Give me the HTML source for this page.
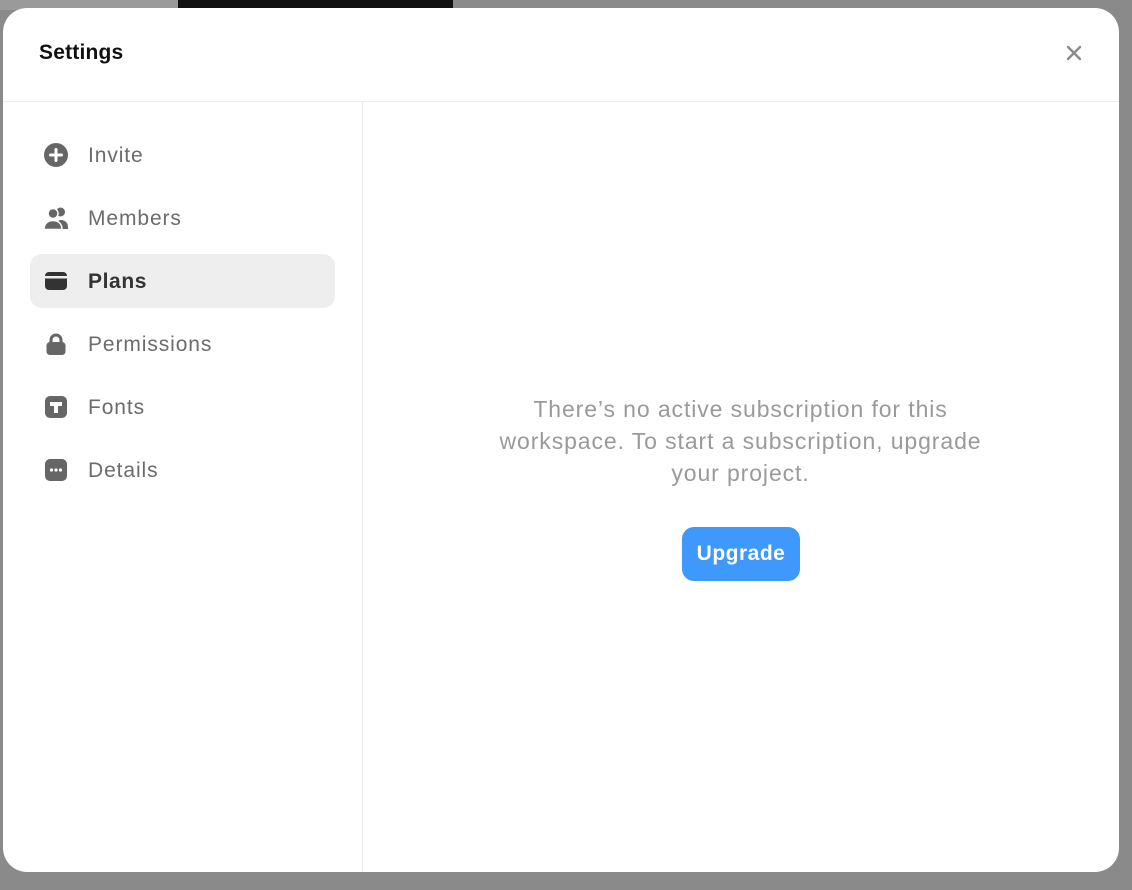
<!DOCTYPE html>
<html><head><meta charset="utf-8"><style>
*{margin:0;padding:0;box-sizing:border-box}
body{width:1132px;height:890px;background:#8a8a8a;position:relative;overflow:hidden;font-family:"Liberation Sans",sans-serif}
.bgimg{position:absolute;left:178px;top:0;width:275px;height:10px;background:#111}
.bgimg2{position:absolute;left:0;top:0;width:178px;height:10px;background:#9a9a9a}
.modal{position:absolute;left:3px;top:8px;width:1116px;height:864px;background:#fff;border-radius:24px;overflow:hidden}
.title{position:absolute;left:36px;top:33px;font-size:21px;font-weight:700;color:#111;letter-spacing:0.2px}
.close{position:absolute;left:1062px;top:36px}
.hline{position:absolute;left:0;top:93px;width:100%;height:1px;background:#ececec}
.vline{position:absolute;left:359px;top:94px;width:1px;bottom:0;background:#ececec}
.item{position:absolute;left:27px;width:305px;height:54px;border-radius:12px}
.item svg{position:absolute;left:13px;top:14px}
.item span{position:absolute;left:58px;font-size:21px;color:#6b6b6b;top:16px;letter-spacing:0.9px}
.active{background:#eeeeee}
.active span{color:#333;font-weight:700;letter-spacing:0.6px}
.msg{position:absolute;left:410px;width:655px;top:385px;text-align:center;font-size:23px;line-height:32px;color:#9a9a9a;letter-spacing:0.9px}
.btn{position:absolute;left:679px;top:519px;width:118px;height:54px;border-radius:12px;background:#3f98fb;color:#fff;font-weight:700;font-size:21px;text-align:center;line-height:54px;letter-spacing:0.5px}
</style></head><body>
<div class="bgimg2"></div><div class="bgimg"></div>
<div class="modal">
<div class="title">Settings</div>
<svg class="close" width="18" height="18" viewBox="0 0 18 18"><path d="M3 3L15 15M15 3L3 15" stroke="#8a8a8a" stroke-width="2.4" stroke-linecap="round"/></svg>
<div class="hline"></div><div class="vline"></div>

<div class="item" style="top:120px"><svg width="26" height="26" viewBox="0 0 26 26"><circle cx="13" cy="13" r="12" fill="#666"/><path d="M13 7.5V18.5M7.5 13H18.5" stroke="#fff" stroke-width="3" stroke-linecap="round"/></svg><span>Invite</span></div>
<div class="item" style="top:183px"><svg width="26" height="26" viewBox="0 0 26 26"><circle cx="17.5" cy="7" r="4.5" fill="#666"/><path d="M12 24c0-6 3-9 6-9s7 2 7 7v2z" fill="#666"/><circle cx="10" cy="8.5" r="5" fill="#666" stroke="#fff" stroke-width="1.5"/><path d="M1 24.5c0-6 4-9 9-9s9 3 9 9z" fill="#666" stroke="#fff" stroke-width="1.5"/></svg><span>Members</span></div>
<div class="item active" style="top:246px"><svg width="26" height="26" viewBox="0 0 26 26"><rect x="2" y="4" width="22" height="18" rx="4" fill="#333"/><rect x="2" y="8" width="22" height="2.5" fill="#eee"/></svg><span>Plans</span></div>
<div class="item" style="top:309px"><svg width="26" height="26" viewBox="0 0 26 26"><path d="M8 12V9a5 5 0 0 1 10 0v3" stroke="#666" stroke-width="3" fill="none"/><rect x="3.5" y="11" width="19" height="13" rx="3.5" fill="#666"/></svg><span>Permissions</span></div>
<div class="item" style="top:372px"><svg width="26" height="26" viewBox="0 0 26 26"><rect x="2" y="2" width="22" height="22" rx="5" fill="#666"/><path d="M7 8h12v4h-4v7h-4v-7h-4z" fill="#fff"/></svg><span>Fonts</span></div>
<div class="item" style="top:435px"><svg width="26" height="26" viewBox="0 0 26 26"><rect x="2" y="2" width="22" height="22" rx="5" fill="#666"/><circle cx="8.5" cy="13" r="1.6" fill="#fff"/><circle cx="13" cy="13" r="1.6" fill="#fff"/><circle cx="17.5" cy="13" r="1.6" fill="#fff"/></svg><span>Details</span></div>

<div class="msg">There’s no active subscription for this<br>workspace. To start a subscription, upgrade<br>your project.</div>
<div class="btn">Upgrade</div>
</div>
</body></html>
